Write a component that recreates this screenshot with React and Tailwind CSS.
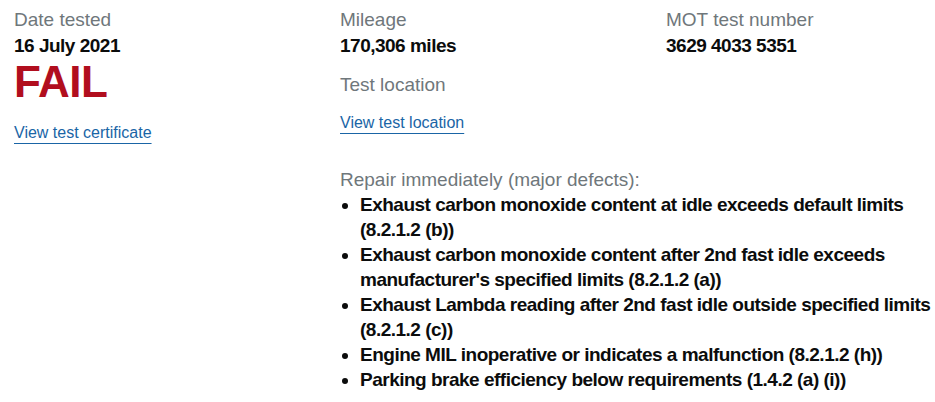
export default function App() {
  const defects = [
    "Exhaust carbon monoxide content at idle exceeds default limits (8.2.1.2 (b))",
    "Exhaust carbon monoxide content after 2nd fast idle exceeds manufacturer's specified limits (8.2.1.2 (a))",
    "Exhaust Lambda reading after 2nd fast idle outside specified limits (8.2.1.2 (c))",
    "Engine MIL inoperative or indicates a malfunction (8.2.1.2 (h))",
    "Parking brake efficiency below requirements (1.4.2 (a) (i))",
  ];
  const label = "text-[19px] leading-[25px] text-[#6f777b]";
  const value = "text-[19px] leading-[25px] font-bold text-[#0b0c0c] tracking-[-0.5px] mt-px";
  const link =
    "block w-fit text-[16px] leading-[20px] text-[#1a65a6] underline underline-offset-[5px] decoration-1";
  return (
    <div
      className="w-[935px] h-[402px] bg-white overflow-hidden flex pl-[14px] pt-[7px]"
      style={{ fontFamily: '"Liberation Sans", Arial, sans-serif' }}
    >
      <dl className="w-[326px] shrink-0">
        <dt className={label}>Date tested</dt>
        <dd className={value}>16 July 2021</dd>
        <dd className="text-[44px] leading-[44px] font-bold text-[#b10e1e] tracking-[-0.5px] mt-[2px]">FAIL</dd>
        <dd className="mt-[19px]">
          <a href="#" className={link}>View test certificate</a>
        </dd>
      </dl>
      <div className="flex-1 flex flex-col">
        <div className="flex">
          <dl className="w-[326px] shrink-0">
            <dt className={label}>Mileage</dt>
            <dd className={value}>170,306 miles</dd>
            <dt className={`${label} mt-[14px]`}>Test location</dt>
            <dd className="mt-[16px]">
              <a href="#" className={link}>View test location</a>
            </dd>
          </dl>
          <dl className="flex-1">
            <dt className={label}>MOT test number</dt>
            <dd className={value}>3629 4033 5351</dd>
          </dl>
        </div>
        <div className="mt-[34px]">
          <p className={label}>Repair immediately (major defects):</p>
          <ul className="list-disc pl-[20px] text-[19px] leading-[25px] font-bold text-[#0b0c0c] tracking-[-0.5px]">
            {defects.map((d) => (
              <li key={d}>{d}</li>
            ))}
          </ul>
        </div>
      </div>
    </div>
  );
}
